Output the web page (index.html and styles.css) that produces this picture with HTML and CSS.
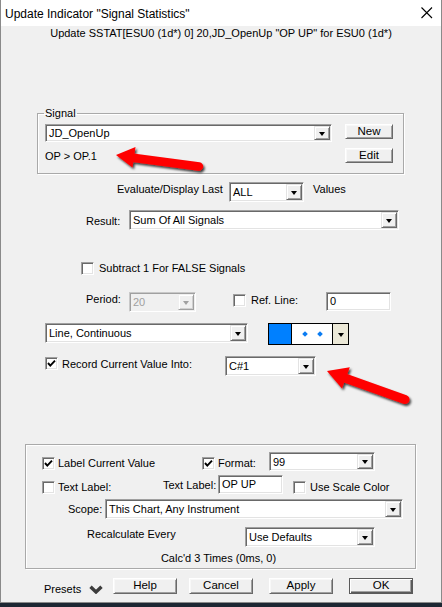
FILE: index.html
```html
<!DOCTYPE html>
<html>
<head>
<meta charset="utf-8">
<title>Update Indicator</title>
<link rel="stylesheet" href="styles.css">
</head>
<body>
<div class="window">
  <div class="titlebar">
    <span class="title">Update Indicator "Signal Statistics"</span>
    <svg class="close" width="12" height="12" viewBox="0 0 12 12"><path d="M0.5 0.5 L11 11 M11 0.5 L0.5 11" stroke="#000" stroke-width="1.1" fill="none"/></svg>
  </div>
  <div class="header">Update SSTAT[ESU0 (1d*) 0] 20,JD_OpenUp "OP UP" for ESU0 (1d*)</div>

  <fieldset class="signal">
    <legend>Signal</legend>
    <div class="signal-body">
      <div class="signal-left">
        <div class="combo h18 w-signal"><span class="val">JD_OpenUp</span><span class="drop"><i class="tri"></i></span></div>
        <div class="formula">OP &gt; OP.1</div>
      </div>
      <div class="signal-right">
        <div class="btn">New</div>
        <div class="btn">Edit</div>
      </div>
    </div>
  </fieldset>

  <div class="row row-eval">
    <span class="lbl l-eval">Evaluate/Display Last</span>
    <div class="combo w-all"><span class="val">ALL</span><span class="drop"><i class="tri"></i></span></div>
    <span class="lbl l-values">Values</span>
  </div>

  <div class="row row-result">
    <span class="lbl l-result">Result:</span>
    <div class="combo w-result"><span class="val">Sum Of All Signals</span><span class="drop"><i class="tri"></i></span></div>
  </div>

  <div class="row row-subtract">
    <span class="cb"></span>
    <span class="lbl cbtext">Subtract 1 For FALSE Signals</span>
  </div>

  <div class="row row-period">
    <span class="lbl l-period">Period:</span>
    <div class="combo disabled w-period"><span class="val">20</span><span class="drop"><i class="tri"></i></span></div>
    <span class="cb cb-ref"></span>
    <span class="lbl l-ref">Ref. Line:</span>
    <div class="edit w-ref">0</div>
  </div>

  <div class="row row-line">
    <div class="combo w-line"><span class="val">Line, Continuous</span><span class="drop"><i class="tri"></i></span></div>
    <div class="colorpick">
      <span class="swatch"></span>
      <span class="dots"><i class="dot"></i><i class="dot"></i></span>
      <span class="cdrop"><i class="tri"></i></span>
    </div>
  </div>

  <div class="row row-record">
    <span class="cb checked"><svg width="9" height="9" viewBox="0 0 9 9"><path d="M1 4 L3.3 6.6 L8 1.6" stroke="#000" stroke-width="1.9" fill="none"/></svg></span>
    <span class="lbl cbtext l-record">Record Current Value Into:</span>
    <div class="combo w-c1"><span class="val">C#1</span><span class="drop"><i class="tri"></i></span></div>
  </div>

  <div class="options">
    <div class="orow orow1">
      <span class="cell c-lcv">
        <span class="cb checked"><svg width="9" height="9" viewBox="0 0 9 9"><path d="M1 4 L3.3 6.6 L8 1.6" stroke="#000" stroke-width="1.9" fill="none"/></svg></span>
        <span class="lbl cbtext2">Label Current Value</span>
      </span>
      <span class="cb checked"><svg width="9" height="9" viewBox="0 0 9 9"><path d="M1 4 L3.3 6.6 L8 1.6" stroke="#000" stroke-width="1.9" fill="none"/></svg></span>
      <span class="lbl cbtext2 l-format">Format:</span>
      <div class="combo h19 w-format"><span class="val">99</span><span class="drop"><i class="tri"></i></span></div>
    </div>
    <div class="orow orow2">
      <span class="cell c-tl">
        <span class="cb"></span>
        <span class="lbl cbtext2">Text Label:</span>
      </span>
      <span class="lbl l-tl2">Text Label:</span>
      <div class="edit w-opup">OP UP</div>
      <span class="cb cb-scale"></span>
      <span class="lbl l-scale">Use Scale Color</span>
    </div>
    <div class="orow orow3">
      <span class="lbl l-scope">Scope:</span>
      <div class="combo w-scope"><span class="val">This Chart, Any Instrument</span><span class="drop"><i class="tri"></i></span></div>
    </div>
    <div class="orow orow4">
      <span class="lbl l-recalc">Recalculate Every</span>
      <div class="combo w-recalc"><span class="val">Use Defaults</span><span class="drop"><i class="tri"></i></span></div>
    </div>
    <div class="orow orow5">Calc'd 3 Times (0ms, 0)</div>
  </div>

  <div class="footer">
    <span class="lbl presets">Presets</span>
    <svg class="chev" width="14" height="9" viewBox="0 0 14 9"><path d="M1.5 1.8 L7 7 L12.5 1.8" stroke="#3c3c3c" stroke-width="3.4" fill="none" stroke-linejoin="miter"/></svg>
    <div class="btn fbtn">Help</div>
    <div class="btn fbtn b-cancel">Cancel</div>
    <div class="btn fbtn b-apply">Apply</div>
    <div class="btn fbtn b-ok default">OK</div>
  </div>

  <svg class="annot" width="442" height="607" viewBox="0 0 442 607">
    <defs>
      <filter id="sh" x="-20%" y="-40%" width="150%" height="200%">
        <feDropShadow dx="1.5" dy="2" stdDeviation="1.3" flood-color="#000" flood-opacity="0.75"/>
      </filter>
    </defs>
    <g filter="url(#sh)" fill="#ff0000" stroke="none">
      <line x1="131" y1="157.5" x2="199" y2="166.5" stroke="#ff0000" stroke-width="8.5" stroke-linecap="round"/>
      <polygon points="116,155 135.5,147 132.5,167.5"/>
    </g>
    <g filter="url(#sh)" fill="#ff0000" stroke="none">
      <line x1="342" y1="377" x2="405" y2="399.5" stroke="#ff0000" stroke-width="9" stroke-linecap="round"/>
      <polygon points="327,371 349.8,367.2 342,388.6"/>
    </g>
  </svg>
</div>
</body>
</html>
```
FILE: styles.css
```css
html, body {
  margin: 0;
  padding: 0;
}
body {
  background: #1d2733;
  width: 442px;
  height: 607px;
  overflow: hidden;
  font-family: "Liberation Sans", Arial, sans-serif;
  font-size: 11px;
  color: #000;
}
.window {
  position: relative;
  box-sizing: border-box;
  width: 442px;
  height: 603px;
  background: #f0f0f0;
  border-left: 1px solid #8a8a8a;
  border-right: 1px solid #8a8a8a;
  border-bottom: 1px solid #8a8a8a;
}
.titlebar {
  height: 26px;
  background: #fff;
  display: flex;
  align-items: center;
  justify-content: space-between;
}
.title {
  font-size: 12px;
  padding-left: 4px;
  padding-top: 1px;
}
.close {
  margin-right: 8px;
  margin-top: 0px;
}
.header {
  height: 14px;
  line-height: 14px;
  text-align: center;
}

/* Signal group */
.signal {
  margin: 67px 0 0 36px;
  width: 367px;
  min-inline-size: 0;
  box-sizing: border-box;
  border: 1px solid #a9a9a9;
  box-shadow: inset 1px 1px 0 #fff, 1px 1px 0 #fff;
  padding: 5px 9px 10px 7px;
}
.signal legend {
  padding: 0 1px;
  margin-left: -1px;
  line-height: 12px;
  font-size: 11px;
}
.signal-body {
  display: flex;
  gap: 13px;
}
.signal-left {
  width: 287px;
}
.formula {
  margin-top: 7px;
  line-height: 14px;
}
.signal-right {
  width: 48px;
  display: flex;
  flex-direction: column;
  gap: 9px;
}

/* Generic controls */
.lbl {
  line-height: 14px;
  white-space: nowrap;
}
.combo {
  box-sizing: border-box;
  height: 20px;
  display: flex;
  align-items: stretch;
  background: #fff;
  border: 1px solid;
  border-color: #a0a0a0 #fff #fff #a0a0a0;
  box-shadow: inset 1px 1px 0 #696969, inset -1px -1px 0 #e3e3e3;
  padding: 1px;
}
.combo.h18 { height: 18px; }
.combo.h19 { height: 19px; }
.combo .val {
  flex: 1;
  padding-left: 2px;
  display: flex;
  align-items: center;
  white-space: nowrap;
  overflow: hidden;
}
.combo .drop {
  width: 16px;
  box-sizing: border-box;
  background: #f0f0f0;
  border: 1px solid;
  border-color: #e3e3e3 #696969 #696969 #e3e3e3;
  box-shadow: inset 1px 1px 0 #fff, inset -1px -1px 0 #a0a0a0;
  display: flex;
  align-items: center;
  justify-content: center;
}
.tri {
  display: block;
  width: 0;
  height: 0;
  border-left: 3.5px solid transparent;
  border-right: 3.5px solid transparent;
  border-top: 4px solid #000;
  margin-top: 1px;
}
.combo.disabled {
  background: #f0f0f0;
  border-color: #c8c8c8 #fff #fff #c8c8c8;
  box-shadow: inset 1px 1px 0 #a0a0a0, inset -1px -1px 0 #f0f0f0;
}
.combo.disabled .val { color: #a0a0a0; }
.combo.disabled .drop {
  border-color: #f0f0f0 #a0a0a0 #a0a0a0 #f0f0f0;
  box-shadow: inset 1px 1px 0 #fff, inset -1px -1px 0 #d0d0d0;
}
.combo.disabled .tri { border-top-color: #a0a0a0; }

.edit {
  box-sizing: border-box;
  height: 19px;
  background: #fff;
  border: 1px solid;
  border-color: #a0a0a0 #fff #fff #a0a0a0;
  box-shadow: inset 1px 1px 0 #696969, inset -1px -1px 0 #e3e3e3;
  padding-left: 3px;
  line-height: 16px;
}

.cb {
  box-sizing: border-box;
  width: 13px;
  height: 13px;
  flex: none;
  background: #fff;
  border: 1px solid;
  border-color: #a0a0a0 #fff #fff #a0a0a0;
  box-shadow: inset 1px 1px 0 #696969, inset -1px -1px 0 #e3e3e3;
  display: flex;
  align-items: center;
  justify-content: center;
}
.cb svg { display: block; }

.btn {
  box-sizing: border-box;
  height: 15px;
  background: #f0f0f0;
  border: 1px solid;
  border-color: #fff #696969 #696969 #fff;
  box-shadow: inset 1px 1px 0 #f8f8f8, inset -1px -1px 0 #a0a0a0;
  text-align: center;
  line-height: 12px;
  font-size: 11.5px;
}

/* Rows */
.row {
  display: flex;
  align-items: flex-start;
}
.row-eval { margin-top: 8px; padding-left: 116px; }
.l-eval { width: 112px; }
.w-all { width: 75px; }
.l-values { margin-left: 9px; }

.row-result { margin-top: 8px; padding-left: 85px; }
.l-result { width: 43px; margin-top: 4px; }
.w-result { width: 270px; }

.row-subtract { margin-top: 31px; padding-left: 80px; align-items: center; }
.cbtext { margin-left: 5px; }

.row-period { margin-top: 17px; padding-left: 85px; }
.l-period { width: 43px; }
.w-period { width: 67px; }
.cb-ref { margin-left: 37px; margin-top: 2px; }
.l-ref { margin-left: 5px; width: 75px; margin-top: 1px; }
.w-ref { width: 65px; }

.row-line { margin-top: 11px; padding-left: 44px; }
.w-line { width: 203px; }
.colorpick {
  margin-left: 20px;
  box-sizing: border-box;
  width: 81px;
  height: 22px;
  border: 1px solid #000;
  display: flex;
}
.swatch {
  width: 22px;
  background: #0080ff;
  border-right: 1px solid #000;
}
.dots {
  flex: 1;
  background: #fff;
  display: flex;
  align-items: center;
  justify-content: center;
  gap: 11px;
  padding-left: 1px;
}
.dot {
  display: block;
  width: 4px;
  height: 4px;
  background: #0a7cf2;
  transform: rotate(45deg);
}
.cdrop {
  width: 15px;
  background: #ece9d8;
  border-left: 1px solid #000;
  display: flex;
  align-items: center;
  justify-content: center;
}

.row-record { margin-top: 11px; padding-left: 44px; }
.row-record .cb { margin-top: 1px; }
.l-record { width: 163px; margin-left: 4px; margin-top: 1px; }
.w-c1 { width: 91px; }

/* Options group */
.options {
  margin: 68px 0 0 24px;
  box-sizing: border-box;
  width: 391px;
  height: 125px;
  border: 1px solid #a9a9a9;
  box-shadow: inset 1px 1px 0 #fff, 1px 1px 0 #fff;
  padding-top: 7px;
}
.orow {
  display: flex;
  align-items: flex-start;
}
.cell {
  display: flex;
  align-items: flex-start;
}
.orow1 { padding-left: 16px; }
.orow1 .cb { margin-top: 5px; }
.cbtext2 { margin-left: 3px; margin-top: 4px; }
.c-lcv { width: 160px; }
.l-format { width: 51px; }
.w-format { width: 106px; }

.orow2 { margin-top: 4px; padding-left: 16px; }
.orow2 .cb { margin-top: 6px; }
.orow2 .cbtext2 { margin-top: 5px; }
.c-tl { width: 121px; }
.l-tl2 { width: 55px; margin-top: 3px; }
.w-opup { width: 65px; }
.cb-scale { margin-left: 10px; }
.l-scale { margin-left: 4px; margin-top: 5px; }

.orow3 { margin-top: 5px; padding-left: 42px; }
.l-scope { width: 37px; margin-top: 3px; }
.w-scope { width: 298px; }

.orow4 { margin-top: 8px; padding-left: 61px; }
.l-recalc { width: 158px; }
.w-recalc { width: 130px; }

.orow5 {
  margin-top: 4px;
  line-height: 14px;
  justify-content: center;
  padding-right: 4px;
}

/* Footer */
.footer {
  display: flex;
  align-items: flex-start;
  margin-top: 9px;
  padding-left: 43px;
}
.presets { margin-top: 4px; width: 37px; }
.chev { margin-left: 8px; margin-top: 7px; }
.fbtn { width: 64px; height: 16px; line-height: 13px; }
.footer .fbtn:first-of-type { margin-left: 10px; }
.b-cancel { margin-left: 12px; }
.b-apply { margin-left: 16px; }
.b-ok { margin-left: 16px; }
.btn.default {
  border-color: #5a5a5a;
  box-shadow: inset 1px 1px 0 #fff, inset -1px -1px 0 #5a5a5a, inset -2px -2px 0 #a0a0a0;
}

.annot {
  position: absolute;
  top: 0;
  left: -1px;
  pointer-events: none;
}
```
